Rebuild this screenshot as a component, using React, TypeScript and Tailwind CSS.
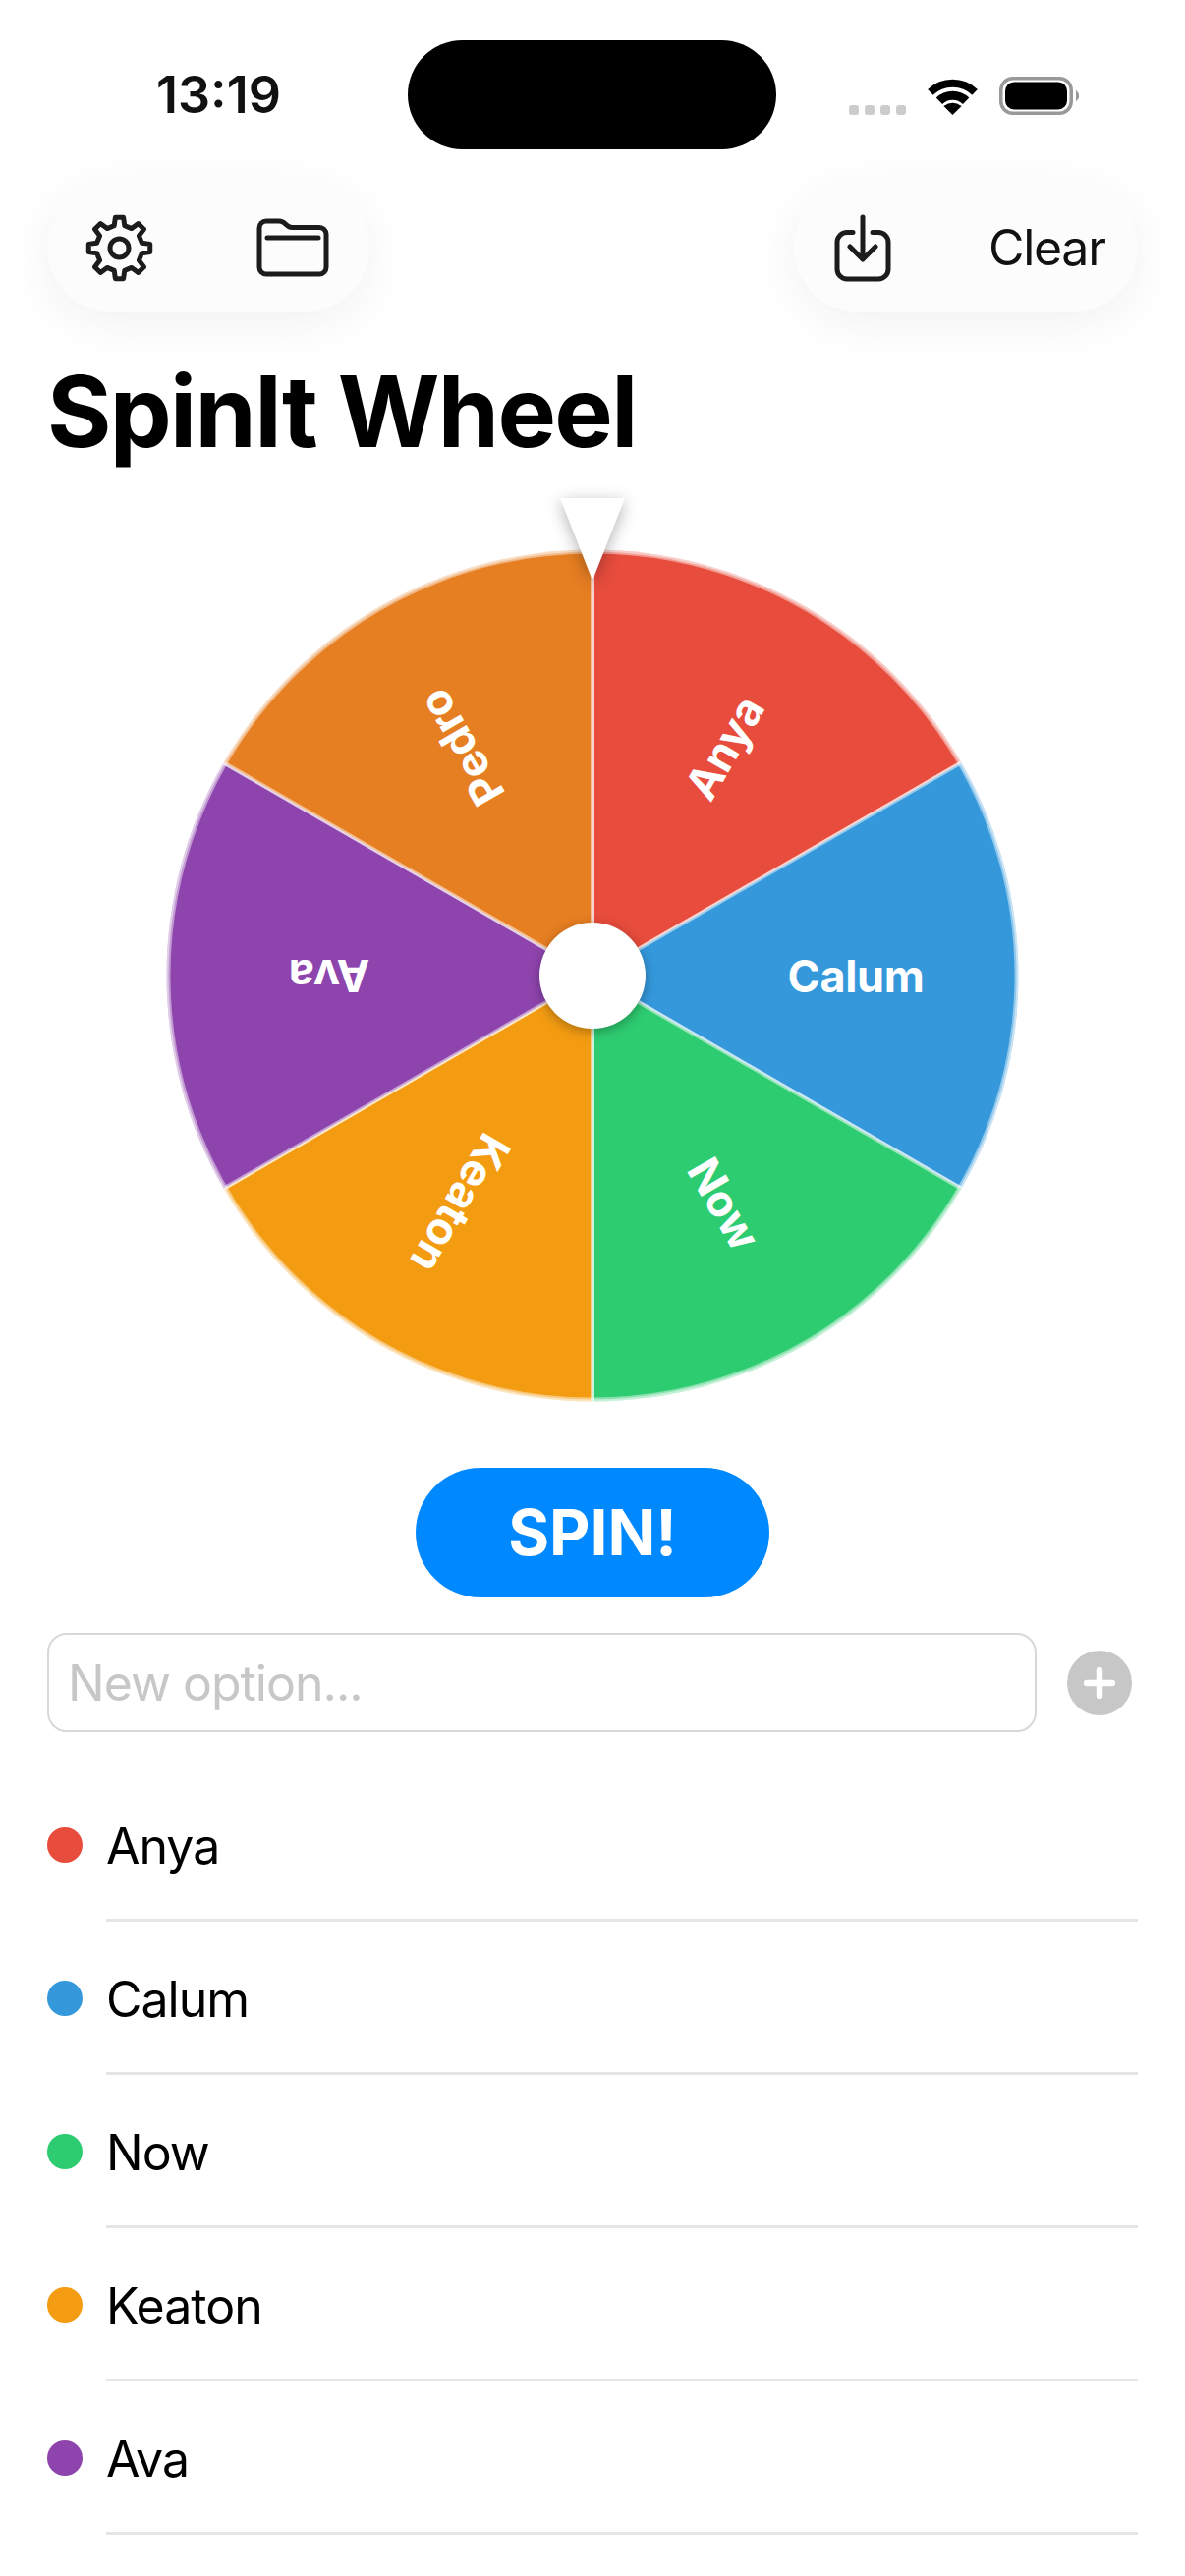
import React from 'react';

const options = [
  { name: 'Anya', color: '#e74c3c' },
  { name: 'Calum', color: '#3498db' },
  { name: 'Now', color: '#2ecc71' },
  { name: 'Keaton', color: '#f39c12' },
  { name: 'Ava', color: '#8e44ad' },
  { name: 'Pedro', color: '#e67e22' },
];

const CX = 434;
const CY = 434;
const R = 433.5;

const polar = (deg: number, r: number) => {
  const a = (deg * Math.PI) / 180;
  return `${(CX + r * Math.cos(a)).toFixed(2)} ${(CY + r * Math.sin(a)).toFixed(2)}`;
};

const gearPath = () => {
  const points: string[] = [];
  for (let i = 0; i < 8; i++) {
    const a = i * 45 - 90;
    const p = (deg: number, r: number) => {
      const t = (deg * Math.PI) / 180;
      return `${(34.5 + r * Math.cos(t)).toFixed(2)} ${(34.5 + r * Math.sin(t)).toFixed(2)}`;
    };
    points.push(p(a - 13, 23.5), p(a - 7.5, 31.5), p(a + 7.5, 31.5), p(a + 13, 23.5));
  }
  return `M${points.join('L')}Z`;
};

const StatusBar = () => (
  <div className="flex h-[186px] pt-[41px]">
    <div className="flex h-[111px] w-[415px] items-center justify-center pl-[30px]">
      <span className="text-[52px] font-semibold leading-none text-[#111]">13:19</span>
    </div>
    <div className="h-[111px] w-[375px] rounded-[56px] bg-black" />
    <div className="ml-[74px] flex h-[76px] items-end">
      <div className="flex gap-[6px]">
        <div className="h-[10px] w-[10px] rounded-[3px] bg-[#cccccc]" />
        <div className="h-[10px] w-[10px] rounded-[3px] bg-[#cccccc]" />
        <div className="h-[10px] w-[10px] rounded-[3px] bg-[#cccccc]" />
        <div className="h-[10px] w-[10px] rounded-[3px] bg-[#cccccc]" />
      </div>
      <svg width="51" height="37" viewBox="0 0 51 37" className="ml-[22px]">
        <path d="M2.9 13.8A33 33 0 0 1 48.1 13.8" fill="none" stroke="#000" strokeWidth="8" />
        <path d="M11.9 22.7A19.5 19.5 0 0 1 39.1 22.7" fill="none" stroke="#000" strokeWidth="9" />
        <path d="M25.5 37L16.4 28Q25.5 21.5 34.6 28Z" fill="#000" />
      </svg>
      <svg width="82" height="39" viewBox="0 0 82 39" className="ml-[22px]">
        <rect x="1.75" y="1.75" width="71.5" height="35.5" rx="12" fill="none" stroke="#999" strokeWidth="3.5" />
        <rect x="6" y="5.5" width="63" height="28" rx="9" fill="#000" />
        <path d="M78 13.5L81 17.5V21.5L78 25.5Z" fill="#999" />
      </svg>
    </div>
  </div>
);

const Toolbar = () => (
  <div className="flex h-[132px] justify-between px-[48px]">
    <div className="flex w-[328px] items-center rounded-[66px] bg-[#fcfcfc] pl-[39px] shadow-[0_10px_50px_rgba(0,0,0,0.06)]">
      <svg width="69" height="69" viewBox="0 0 69 69" fill="none" stroke="#1c1c1e" strokeWidth="5" strokeLinejoin="round">
        <path d={gearPath()} />
        <circle cx="34.5" cy="34.5" r="9.5" />
      </svg>
      <svg width="74" height="60" viewBox="0 0 74 60" fill="none" stroke="#1c1c1e" strokeWidth="5" strokeLinecap="round" strokeLinejoin="round" className="ml-[105px]">
        <path d="M3 10a7 7 0 0 1 7-7h13c3 0 4.500 1 6.500 3s3.500 3.500 6.500 3.500H64a7 7 0 0 1 7 7V50a7 7 0 0 1-7 7H10a7 7 0 0 1-7-7Z" />
        <path d="M11 20H63" />
      </svg>
    </div>
    <div className="flex w-[350px] items-center rounded-[66px] bg-[#fcfcfc] pl-[41px] shadow-[0_10px_50px_rgba(0,0,0,0.06)]">
      <svg width="58" height="69" viewBox="0 0 58 69" fill="none" stroke="#1c1c1e" strokeWidth="5" strokeLinecap="round" strokeLinejoin="round">
        <path d="M19 18.500H13a10 10 0 0 0-10 10V56a10 10 0 0 0 10 10H45a10 10 0 0 0 10-10V28.500a10 10 0 0 0-10-10H39" />
        <path d="M29 3V45" />
        <path d="M16 33L29 46L42 33" />
      </svg>
      <span className="ml-[99px] text-[50px] leading-none tracking-[-1.3px] text-[#111]">Clear</span>
    </div>
  </div>
);

const Wheel = () => (
  <div className="relative mx-auto mt-[85px] h-[868px] w-[868px]">
    <svg width="868" height="868" viewBox="0 0 868 868">
      {options.map((o, i) => {
        const start = -90 + i * 60;
        const end = start + 60;
        return (
          <path
            key={o.name}
            d={`M${CX} ${CY}L${polar(start, R)}A${R} ${R} 0 0 1 ${polar(end, R)}Z`}
            fill={o.color}
            stroke="rgba(255,255,255,0.5)"
            strokeWidth="4"
          />
        );
      })}
      <circle cx={CX} cy={CY} r="431.5" fill="none" stroke="rgba(255,255,255,0.45)" strokeWidth="4" />
      {options.map((o, i) => (
        <text
          key={o.name}
          transform={`rotate(${-60 + i * 60} ${CX} ${CY})`}
          x={CX + 268}
          y={CY}
          textAnchor="middle"
          dominantBaseline="central"
          className="fill-white text-[45px] font-bold tracking-[-0.3px]"
        >
          {o.name}
        </text>
      ))}
    </svg>
    <div className="absolute left-[380px] top-[380px] h-[108px] w-[108px] rounded-full bg-white shadow-[0_3px_12px_rgba(0,0,0,0.3)]" />
    <svg width="100" height="110" viewBox="0 0 100 110" className="absolute left-[384px] top-[-62px] drop-shadow-[0_4px_8px_rgba(0,0,0,0.3)]">
      <path d="M17 10H83L51.500 90Q50 93 48.500 90Z" fill="#fff" />
    </svg>
  </div>
);

const App = () => (
  <div className="h-[2622px] w-[1206px] overflow-hidden bg-white font-['Inter',sans-serif] text-black">
    <StatusBar />
    <Toolbar />
    <h1 className="ml-[48px] mt-[46px] text-[100px] font-bold leading-[110px] tracking-[-1.7px]">SpinIt Wheel</h1>
    <Wheel />
    <button className="mx-auto mt-[67px] flex h-[132px] w-[360px] items-center justify-center rounded-[66px] bg-[#0088ff] text-[64px] font-bold leading-none text-white">
      SPIN!
    </button>
    <div className="mt-[36px] flex items-center pl-[48px] pr-[54px]">
      <input
        placeholder="New option..."
        className="h-[101px] w-[1007px] rounded-[20px] border-2 border-[#d8d8d8] px-[19px] text-[50px] tracking-[-1px] outline-none placeholder:text-[#c7c7c7]"
      />
      <div className="ml-[31px] flex h-[66px] w-[66px] items-center justify-center rounded-full bg-[#c7c7c7]">
        <svg width="32" height="32" viewBox="0 0 32 32" stroke="#fff" strokeWidth="6.500" strokeLinecap="round">
          <path d="M16 3V29M3 16H29" />
        </svg>
      </div>
    </div>
    <div className="mt-[37px]">
      {options.slice(0, 5).map((o) => (
        <div key={o.name} className="flex items-center pl-[48px] pr-[48px]">
          <div className="h-[36px] w-[36px] rounded-full" style={{ backgroundColor: o.color }} />
          <div className="ml-[24px] flex h-[156px] flex-1 items-center border-b-[3px] border-[#e5e5e7] pt-[5px] text-[50px] tracking-[-1px]">
            {o.name}
          </div>
        </div>
      ))}
    </div>
  </div>
);

export default App;
